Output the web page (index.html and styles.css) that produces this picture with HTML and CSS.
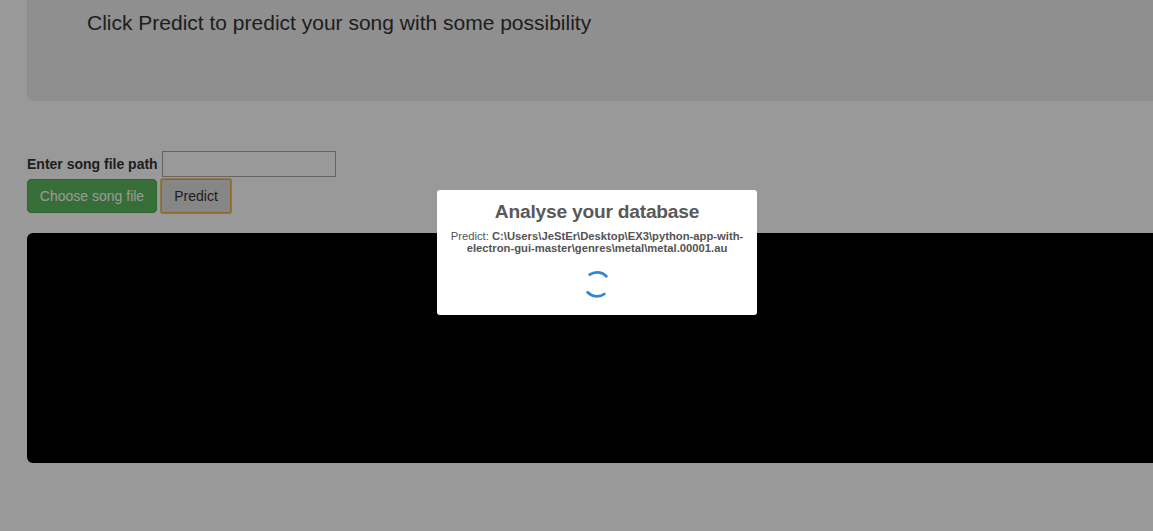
FILE: index.html
```html
<!DOCTYPE html>
<html lang="en">
<head>
<meta charset="utf-8">
<title>Song genre prediction</title>
<link rel="stylesheet" href="styles.css">
</head>
<body>
<main class="page">
  <section class="jumbotron">
    <p class="lead">Click Predict to predict your song with some possibility</p>
  </section>
  <form class="song-form">
    <div class="path-row">
      <label class="path-label" for="path">Enter song file path</label>
      <input class="path-input" id="path" type="text">
    </div>
    <div class="button-row">
      <button class="btn btn-success" type="button">Choose song file</button>
      <button class="btn btn-default" type="button">Predict</button>
    </div>
  </form>
  <section class="output"></section>
</main>
<div class="backdrop">
  <div class="modal" role="dialog">
    <h2 class="modal-title">Analyse your database</h2>
    <div class="modal-text">Predict: <b>C:\Users\JeStEr\Desktop\EX3\python-app-with-electron-gui-master\genres\metal\metal.00001.au</b></div>
    <svg class="spinner" width="30" height="30" viewBox="0 0 30 30">
      <path d="M7.6 5.6A13 13 0 0 1 24.4 7.3M5.6 23.3A13 13 0 0 0 22.4 25"/>
    </svg>
  </div>
</div>
</body>
</html>
```
FILE: styles.css
```css
* { box-sizing: border-box; }
body {
  margin: 0;
  height: 531px;
  overflow: hidden;
  background: #fff;
  color: #333;
  font: 14px/20px "Liberation Sans", Arial, sans-serif;
}
.page { padding-left: 27px; }
.jumbotron {
  height: 101px;
  padding: 8px 60px 63px;
  background: #eee;
  border-radius: 0 0 0 6px;
}
.lead { margin: 0; font-size: 21px; line-height: 30px; }
.song-form { padding-top: 50px; }
.path-row { display: flex; align-items: center; gap: 5px; height: 26px; }
.path-label { width: 130px; font-weight: 700; white-space: nowrap; }
.path-input {
  width: 174px;
  height: 26px;
  padding: 2px;
  border: 1px solid #a9a9a9;
  background: #fff;
  font: inherit;
}
.button-row { display: flex; gap: 4px; margin-top: 2px; }
.btn {
  height: 34px;
  padding: 6px 0;
  border: 1px solid;
  border-radius: 4px;
  font: inherit;
  text-align: center;
  white-space: nowrap;
}
.btn-success { width: 130px; color: #fff; background: #5cb85c; border-color: #4cae4c; }
.btn-default {
  width: 70px;
  color: #333;
  background: #e0e0e0;
  border-color: #eeb04a;
  border-radius: 2px;
  box-shadow: 0 0 0 1px rgba(238, 170, 60, .7);
}
.output {
  height: 230px;
  margin-top: 20px;
  background: #000;
  border-radius: 6px 0 0 6px;
}
.backdrop {
  position: fixed;
  inset: 0;
  display: flex;
  justify-content: center;
  align-items: flex-start;
  padding: 190px 0 0 41px;
  background: rgba(0, 0, 0, .4);
}
.modal {
  display: flex;
  flex-direction: column;
  align-items: center;
  width: 320px;
  height: 125px;
  padding: 11px 10px 0;
  background: #fff;
  border-radius: 3px;
  color: #545454;
  text-align: center;
}
.modal-title { margin: 0; font-size: 19.2px; line-height: 22px; letter-spacing: -.22px; color: #595959; }
.modal-text { margin-top: 7px; font-size: 11.25px; line-height: 12px; }
.spinner { margin-top: 15px; fill: none; stroke: #2f86d8; stroke-width: 2.7; stroke-linecap: round; }
```
